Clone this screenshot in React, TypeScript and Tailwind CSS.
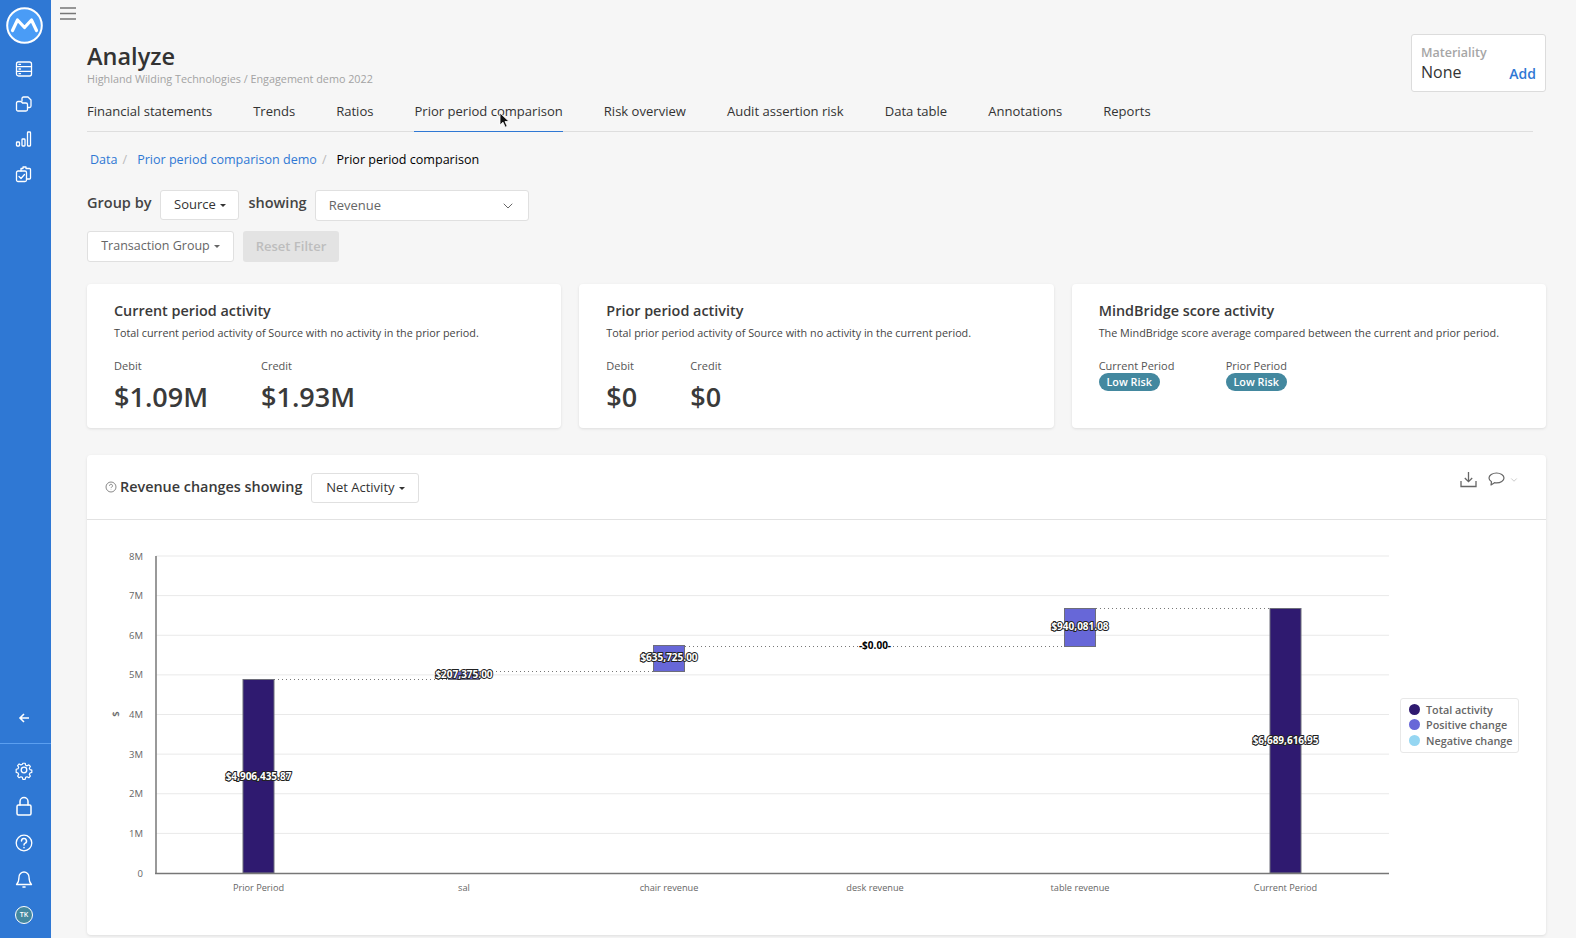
import { ChevronDown } from "lucide-react";

const tabs = [
  "Financial statements",
  "Trends",
  "Ratios",
  "Prior period comparison",
  "Risk overview",
  "Audit assertion risk",
  "Data table",
  "Annotations",
  "Reports",
];

const Caret = () => <span className="ml-[4px] inline-block border-x-[3.500px] border-t-[3.500px] border-x-transparent border-t-current align-middle" />;

function SideIcon({ children, className }: { children: React.ReactNode; className: string }) {
  return (
    <svg className={className} width="20" height="20" viewBox="0 0 20 20" fill="none" stroke="white" strokeWidth="1.3" strokeLinecap="round" strokeLinejoin="round">
      {children}
    </svg>
  );
}

function Sidebar() {
  return (
    <aside className="flex h-[938px] w-[51px] shrink-0 flex-col items-center bg-[#2f78d4]">
      <div className="flex w-full flex-col items-center pr-[3px]">
        <svg className="mt-[7px]" width="37" height="37" viewBox="0 0 37 37" fill="none">
          <circle cx="18.5" cy="18.5" r="17.3" fill="#4a9cf6" stroke="white" strokeWidth="2" />
          <path d="M6.500 23.500 11.500 13 18.500 20.500 25.500 13 30.500 23.500" stroke="white" strokeWidth="3.200" strokeLinejoin="round" strokeLinecap="round" />
        </svg>
        <SideIcon className="mt-[15px]">
          <rect x="2.5" y="3" width="15" height="14" rx="2" />
          <path d="M2.5 7.7h15M2.5 12.3h15M5 5.4h1.5M5 10h1.5M5 14.7h1.5" />
        </SideIcon>
        <SideIcon className="mt-[15px]">
          <path d="M8 7V4.5A1.5 1.5 0 0 1 9.500 3H14l3 3v6a1.500 1.500 0 0 1-1.500 1.500H14" />
          <path d="M2.500 9A1.500 1.500 0 0 1 4 7.500h3l1.500 1.500H12A1.500 1.500 0 0 1 13.500 10.500v5A1.500 1.500 0 0 1 12 17H4a1.500 1.500 0 0 1-1.500-1.500Z" />
        </SideIcon>
        <SideIcon className="mt-[15px]">
          <rect x="2.500" y="13" width="3" height="4" rx=".7" />
          <rect x="8" y="10" width="3" height="7" rx=".7" />
          <rect x="13.500" y="3" width="3" height="14" rx=".7" />
        </SideIcon>
        <SideIcon className="mt-[15px]">
          <rect x="2.500" y="7" width="10" height="10.500" rx="1.500" />
          <path d="m5 12.500 2 2 3.500-4M7 7V4.500h2V3h3v1.500h3.500a1 1 0 0 1 1 1V14a1 1 0 0 1-1 1h-3" />
        </SideIcon>
        <svg className="mt-[528px]" width="12" height="12" viewBox="0 0 12 12" fill="none" stroke="white" strokeWidth="1.600">
          <path d="M11 6H2M6 2 2 6l4 4" />
        </svg>
      </div>
      <div className="mt-[19px] h-px w-full bg-[#5b9ff0]" />
      <div className="flex w-full flex-col items-center pr-[3px]">
        <SideIcon className="mt-[16px]">
          <circle cx="10" cy="10" r="2.800" />
          <path d="M8.700 2.500h2.600l.5 2.200 1.600.7 2-1.100 1.700 1.800-1.200 1.900.7 1.600 2.100.6v2.500l-2.100.6-.7 1.600 1.200 1.900-1.700 1.800-2-1.100-1.600.7-.5 2.200H8.700l-.5-2.200-1.600-.7-2 1.100-1.700-1.800 1.200-1.900-.7-1.600-2.100-.6V9.200l2.100-.6.7-1.600-1.200-1.900 1.700-1.800 2 1.100 1.600-.7Z" transform="translate(1 1) scale(.9)" />
        </SideIcon>
        <SideIcon className="mt-[16px]">
          <rect x="3" y="9" width="14" height="10" rx="1.500" strokeWidth="1.500" />
          <path d="M6 9V5.500a4 4 0 0 1 8 0V9" strokeWidth="1.500" />
        </SideIcon>
        <SideIcon className="mt-[17px]">
          <circle cx="10" cy="10" r="7.800" />
          <path d="M7.500 8a2.500 2.500 0 1 1 3.700 2.200c-.8.400-1.200.900-1.200 1.800M10 14.500v.2" strokeWidth="1.500" />
        </SideIcon>
        <SideIcon className="mt-[16px]">
          <path d="M5 8a5 5 0 0 1 10 0c0 4 1 6 2.500 7.500h-15C4 14 5 12 5 8Z" />
          <path d="M9 18h2" strokeWidth="1.600" />
        </SideIcon>
        <div className="mt-[17px] flex h-[18px] w-[18px] items-center justify-center rounded-full border border-white bg-[#43889f] text-[7px] font-semibold text-white">TK</div>
      </div>
    </aside>
  );
}

function StatCard({ title, desc, debit, credit, creditClass }: { title: string; desc: string; debit: string; credit: string; creditClass: string }) {
  return (
    <section className="h-[144px] w-[474.330px] rounded-[4px] bg-white pl-[27px] pt-[17px] shadow-[0_1px_3px_rgba(0,0,0,0.1)]">
      <h3 className="text-[14.400px] leading-[20px] font-semibold text-[#3a3a3a]">{title}</h3>
      <p className="mt-[4px] text-[10.800px] leading-[15px] text-[#444]">{desc}</p>
      <div className="mt-[18px] flex">
        <div className={creditClass}>
          <p className="text-[11px] leading-[15px] text-[#555]">Debit</p>
          <p className="mt-[5px] text-[27px] leading-[38px] font-semibold text-[#3a3a3a]">{debit}</p>
        </div>
        <div>
          <p className="text-[11px] leading-[15px] text-[#555]">Credit</p>
          <p className="mt-[5px] text-[27px] leading-[38px] font-semibold text-[#3a3a3a]">{credit}</p>
        </div>
      </div>
    </section>
  );
}

function ScoreCard() {
  const Item = ({ label, className }: { label: string; className: string }) => (
    <div className={className}>
      <p className="text-[11px] leading-[15px] text-[#555]">{label}</p>
      <span className="block h-[18px] w-[61px] rounded-full bg-[#43889f] text-center text-[10.800px] leading-[17px] font-semibold text-white">Low Risk</span>
    </div>
  );
  return (
    <section className="h-[144px] w-[474.330px] rounded-[4px] bg-white pl-[27px] pt-[17px] shadow-[0_1px_3px_rgba(0,0,0,0.1)]">
      <h3 className="text-[14.400px] leading-[20px] font-semibold text-[#3a3a3a]">MindBridge score activity</h3>
      <p className="mt-[4px] text-[10.800px] leading-[15px] text-[#444]">The MindBridge score average compared between the current and prior period.</p>
      <div className="mt-[18px] flex">
        <Item label="Current Period" className="w-[127px]" />
        <Item label="Prior Period" className="" />
      </div>
    </section>
  );
}

const FONT = "'Open Sans', sans-serif";

function Label({ x, y, children, dark }: { x: number; y: number; children: string; dark?: boolean }) {
  return (
    <text
      x={x}
      y={y}
      textAnchor="middle"
      fontSize="10"
      fontWeight="700"
      fontFamily={FONT}
      fill={dark ? "#000" : "#fff"}
      stroke={dark ? "#fff" : "#222"}
      strokeWidth="2"
      paintOrder="stroke"
    >
      {children}
    </text>
  );
}

// plot coordinates are page coordinates, the viewBox maps them into the chart card
function Chart() {
  const ox = 87;
  const oy = 521;
  const ticks = ["0", "1M", "2M", "3M", "4M", "5M", "6M", "7M", "8M"];
  const cats: [string, number][] = [
    ["Prior Period", 258.500],
    ["sal", 464],
    ["chair revenue", 669],
    ["desk revenue", 875],
    ["table revenue", 1080],
    ["Current Period", 1285.500],
  ];
  const bars = [
    { x: 258.500, top: 680.500, bottom: 874, fill: "#2f1a70" },
    { x: 464, top: 672.500, bottom: 680.500, fill: "#6767d8" },
    { x: 669, top: 646.500, bottom: 672.500, fill: "#6767d8" },
    { x: 1080, top: 609.500, bottom: 647.500, fill: "#6767d8" },
    { x: 1285.500, top: 609.500, bottom: 874, fill: "#2f1a70" },
  ];
  const links = [
    [274, 448, 680.500],
    [480, 653, 672.500],
    [685, 1064, 647.500],
    [1096, 1270, 609.500],
  ];
  return (
    <svg width="1459" height="414" viewBox={`${ox} ${oy} 1459 414`} className="block">
      {ticks.map((t, i) => {
        const y = 874 - i * 39.625;
        return (
          <g key={t}>
            {i > 0 && <line x1="156" x2="1389" y1={y} y2={y} stroke="#e9e9e9" />}
            <text x="143" y={y + 3.500} textAnchor="end" fontSize="9.500" fontFamily={FONT} fontWeight="500" fill="#666">{t}</text>
          </g>
        );
      })}
      <text transform="translate(119 715) rotate(-90)" textAnchor="middle" fontSize="9.500" fontFamily={FONT} fontWeight="600" fill="#666">$</text>
      {links.map(([a, b, y]) => (
        <line key={a} x1={a} x2={b} y1={y} y2={y} stroke="#777" strokeDasharray="1 3" />
      ))}
      {bars.map((b) => (
        <rect key={b.x} x={b.x - 15.500} y={b.top} width="31" height={b.bottom - b.top} fill={b.fill} stroke="#6d6d7a" strokeWidth="1" />
      ))}
      <line x1="156" x2="156" y1="557" y2="875" stroke="#777" strokeWidth="1.500" />
      <line x1="155" x2="1389" y1="874.500" y2="874.500" stroke="#777" strokeWidth="1.500" />
      {cats.map(([c, x]) => (
        <text key={c} x={x} y="892" textAnchor="middle" fontSize="9.200" fontFamily={FONT} fontWeight="500" fill="#666">{c}</text>
      ))}
      <Label x={258.500} y={781}>$4,906,435.87</Label>
      <Label x={464} y={679}>$207,375.00</Label>
      <Label x={669} y={662}>$635,725.00</Label>
      <Label x={875} y={649.500} dark>-$0.00-</Label>
      <Label x={1080} y={631}>$940,081.08</Label>
      <Label x={1285.500} y={745}>$6,689,616.95</Label>
    </svg>
  );
}

function Legend() {
  const items = [
    ["Total activity", "bg-[#2f1a70]"],
    ["Positive change", "bg-[#6767d8]"],
    ["Negative change", "bg-[#95d6f2]"],
  ];
  return (
    <div className="absolute left-[1313px] top-[243px] flex h-[55px] w-[119px] flex-col justify-center gap-[4.500px] rounded-[3px] border border-[#e8e8e8] bg-white pb-[2px] pl-[8px]">
      {items.map(([name, color]) => (
        <div key={name} className="flex items-center gap-[6px] text-[10.800px] leading-[11px] font-semibold text-[#666]">
          <span className={`h-[11px] w-[11px] rounded-full ${color}`} />
          {name}
        </div>
      ))}
    </div>
  );
}

export default function App() {
  return (
    <div className="flex h-[938px] w-[1576px] overflow-hidden bg-[#f6f6f6] font-['Open_Sans',sans-serif] text-[#333]">
      <Sidebar />
      <main className="relative min-w-0 flex-1">
        <svg className="absolute left-[9px] top-[7px]" width="16" height="13" viewBox="0 0 16 13" stroke="#777" strokeWidth="1.300">
          <path d="M0 1h16M0 6.500h16M0 12h16" />
        </svg>
        <div className="flex pl-[36px] pr-[30px] pt-[41px]">
          <div>
            <h1 className="text-[23.500px] leading-[31px] font-semibold text-[#333]">Analyze</h1>
            <p className="text-[10.800px] leading-[14px] text-[#a3a3a3]">Highland Wilding Technologies / Engagement demo 2022</p>
          </div>
          <div className="ml-auto -mt-[7px] h-[58px] w-[135px] rounded-[3px] border border-[#dcdcdc] bg-white pl-[9px] pr-[9px] pt-[9px]">
            <p className="text-[12.500px] leading-[17px] font-semibold text-[#a6a6a6]">Materiality</p>
            <div className="mt-[1px] flex items-end justify-between">
              <span className="text-[16px] leading-[21px] font-medium text-[#333]">None</span>
              <span className="text-[14px] leading-[19px] font-semibold text-[#2f78d4]">Add</span>
            </div>
          </div>
        </div>
        <nav className="mr-[43px] ml-[36px] flex h-[40px] gap-[41px] border-b border-[#dedede]">
          {tabs.map((t) => (
            <span key={t} className={`h-[40px] pt-[10px] text-[13.050px] leading-[18px] font-medium text-[#333] ${t === "Prior period comparison" ? "border-b border-[#2f78d4]" : ""}`}>
              {t}
            </span>
          ))}
        </nav>
        <div className="ml-[39px] mt-[19px] flex h-[18px] items-center text-[12.550px] leading-[18px]">
          <span className="text-[#2f78d4]">Data</span>
          <span className="ml-[5px] text-[#bbb]">/</span>
          <span className="ml-[10px] text-[#2f78d4]">Prior period comparison demo</span>
          <span className="ml-[5px] text-[#bbb]">/</span>
          <span className="ml-[10px] text-black">Prior period comparison</span>
        </div>
        <div className="ml-[36px] mt-[21px] flex items-start">
          <span className="mt-[3px] text-[14.500px] leading-[20px] font-semibold text-[#444]">Group by</span>
          <button className="ml-[9px] h-[30px] w-[79px] rounded-[3px] border border-[#e0e0e0] bg-white text-[13px] font-medium text-[#333]">Source<Caret /></button>
          <span className="ml-[9px] mt-[3px] text-[14.500px] leading-[20px] font-semibold text-[#444]">showing</span>
          <div className="ml-[8px] flex h-[31px] w-[214px] items-center justify-between rounded-[3px] border border-[#e0e0e0] bg-white pl-[13px] pr-[12px] text-[13px] text-[#666]">
            Revenue
            <ChevronDown className="h-[16px] w-[16px] text-[#666]" strokeWidth={1.500} />
          </div>
        </div>
        <div className="ml-[36px] mt-[10px] flex gap-[9px]">
          <button className="h-[31px] w-[147px] rounded-[3px] border border-[#e0e0e0] bg-white text-[12.500px] text-[#666]">Transaction Group<Caret /></button>
          <button className="h-[31px] w-[96px] rounded-[3px] bg-[#e3e3e3] text-[13px] font-semibold text-[#bdbdbd]">Reset Filter</button>
        </div>
        <div className="ml-[36px] mt-[22px] flex gap-[18px]">
          <StatCard title="Current period activity" desc="Total current period activity of Source with no activity in the prior period." debit="$1.09M" credit="$1.93M" creditClass="w-[147px]" />
          <StatCard title="Prior period activity" desc="Total prior period activity of Source with no activity in the current period." debit="$0" credit="$0" creditClass="w-[84px]" />
          <ScoreCard />
        </div>
        <section className="relative ml-[36px] mt-[27px] h-[480px] w-[1459px] rounded-[4px] bg-white shadow-[0_1px_3px_rgba(0,0,0,0.1)]">
          <header className="flex h-[65px] items-start border-b border-[#e2e2e2] pl-[18px] pt-[18px]">
            <svg className="mt-[8px]" width="12" height="12" viewBox="0 0 12 12" fill="none" stroke="#888" strokeWidth="1">
              <circle cx="6" cy="6" r="5" />
              <path d="M4.500 4.800a1.500 1.500 0 1 1 2.200 1.300c-.5.300-.7.500-.7 1M6 8.700v.3" />
            </svg>
            <h2 className="ml-[3px] mt-[4px] text-[14.400px] leading-[20px] font-semibold text-[#3a3a3a]">Revenue changes showing</h2>
            <button className="ml-[9px] h-[30px] w-[108px] rounded-[3px] border border-[#e0e0e0] bg-white text-[13px] font-medium text-[#333]">Net Activity<Caret /></button>
            <div className="ml-auto mr-[27px] -mt-[2px] flex items-center gap-[11px]">
              <svg width="17" height="17" viewBox="0 0 17 17" fill="none" stroke="#666" strokeWidth="1.300">
                <path d="M1 10v5.500h15V10M8.500 1v9.500M4.800 7l3.700 3.700L12.200 7" />
              </svg>
              <svg width="17" height="15" viewBox="0 0 17 15" fill="none" stroke="#666" strokeWidth="1.200" strokeLinejoin="round">
                <path d="M8.500 1C4.400 1 1 3.200 1 6c0 1.500 1 2.800 2.500 3.700L3 13l3.500-2.300c.6.100 1.300.2 2 .2 4.100 0 7.500-2.200 7.500-4.900S12.600 1 8.500 1Z" />
              </svg>
              <ChevronDown className="-ml-[7px] h-[10px] w-[10px] text-[#aaa]" strokeWidth={1.500} />
            </div>
          </header>
          <Chart />
          <Legend />
        </section>
        <svg className="absolute left-[448px] top-[112px]" width="11" height="17" viewBox="0 0 11 17">
          <path d="M1 1v12l3-2.800 2.200 5 2-.9-2.200-4.800h4Z" fill="#111" stroke="white" strokeWidth=".8" />
        </svg>
      </main>
    </div>
  );
}
